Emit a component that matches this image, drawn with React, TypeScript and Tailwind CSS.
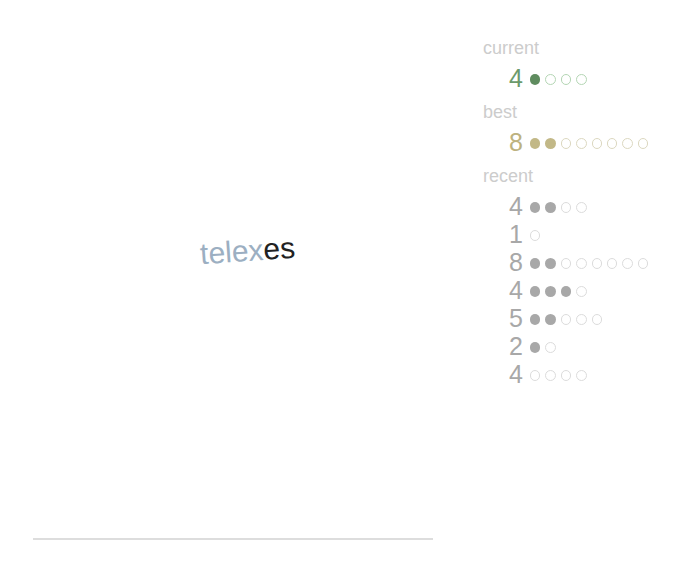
const GROUPS = [
  {
    label: "current",
    rows: [{ total: 4, hit: 1 }],
    tone: "green" as const,
  },
  {
    label: "best",
    rows: [{ total: 8, hit: 2 }],
    tone: "gold" as const,
  },
  {
    label: "recent",
    rows: [
      { total: 4, hit: 2 },
      { total: 1, hit: 0 },
      { total: 8, hit: 2 },
      { total: 4, hit: 3 },
      { total: 5, hit: 2 },
      { total: 2, hit: 1 },
      { total: 4, hit: 0 },
    ],
    tone: "grey" as const,
  },
]

const TONES = {
  green: { num: "text-[#6b9a6b]", on: "bg-[#5f8c5f]", off: "border-[#b4d6b4]" },
  gold: { num: "text-[#bdb27f]", on: "bg-[#c2b887]", off: "border-[#dcd8c0]" },
  grey: { num: "text-[#a8a8a8]", on: "bg-[#a8a8a8]", off: "border-[#dcdcdc]" },
}

function Dots({ total, hit, tone }: { total: number; hit: number; tone: keyof typeof TONES }) {
  const t = TONES[tone]
  return (
    <div className="mt-[3px] flex gap-[5px]">
      {Array.from({ length: total }, (_, i) => (
        <span
          key={i}
          className={`h-[10.4px] w-[10.4px] rounded-full ${i < hit ? t.on : `border ${t.off}`}`}
        />
      ))}
    </div>
  )
}

export default function App() {
  return (
    <div className="flex h-[567px] w-[678px] bg-white font-['Liberation_Sans',Arial,sans-serif]">
      <div className="flex w-[483px] flex-col px-[33px]">
        <div className="flex-1 pl-[167px] pt-[236px]">
          <div className="inline-block -rotate-[4deg] text-[30px] leading-none">
            <span className="text-[#9cafc2]">telex</span>
            <span className="text-[#222]">es</span>
          </div>
        </div>
        <div className="mb-[27px] h-[2px] w-[400px] bg-[#dddddd]" />
      </div>

      <div className="flex flex-col pt-[36px]">
        {GROUPS.map((g) => (
          <div key={g.label} className="mb-[8px] flex flex-col gap-[4px]">
            <div className="text-[18px] leading-[24px] text-[#cccccc]">{g.label}</div>
            <div className="flex flex-col">
              {g.rows.map((r, i) => (
                <div key={i} className="flex h-[28px] items-center gap-[7px]">
                  <span className={`w-[40px] text-right text-[25px] leading-[28px] ${TONES[g.tone].num}`}>
                    {r.total}
                  </span>
                  <Dots total={r.total} hit={r.hit} tone={g.tone} />
                </div>
              ))}
            </div>
          </div>
        ))}
      </div>
    </div>
  )
}
